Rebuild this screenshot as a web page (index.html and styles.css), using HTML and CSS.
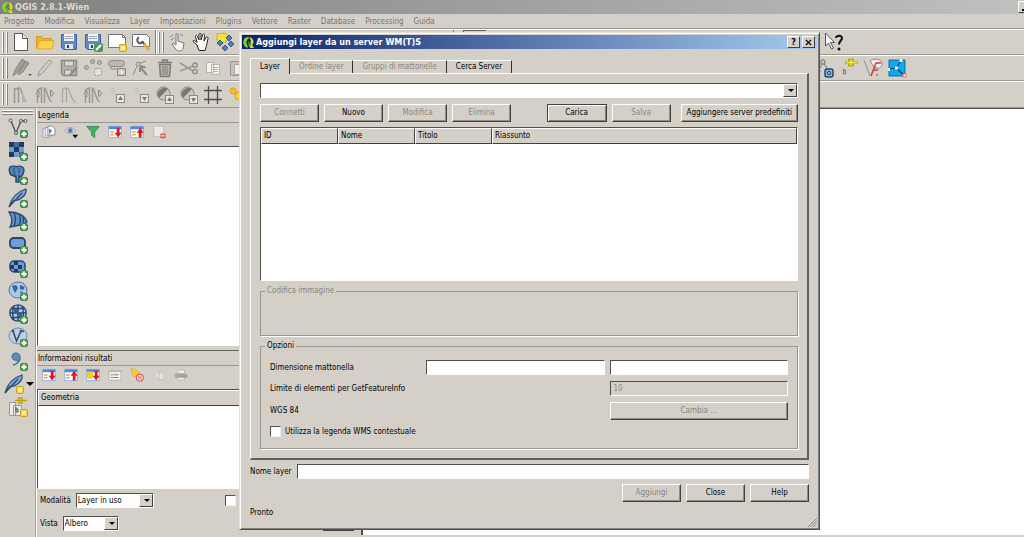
FILE: index.html
```html
<!DOCTYPE html>
<html lang="it">
<head>
<meta charset="utf-8">
<title>QGIS 2.8.1-Wien</title>
<link rel="stylesheet" href="styles.css">
</head>
<body>
<svg class="defs" width="0" height="0">
  <defs>
    <symbol id="q" viewBox="0 0 14 14"><path d="M7 1C3 1 1.500 4 1.500 7s2 5.500 5 5.500L5.500 9.500 4.500 7 5.500 4 7.500 2.500z" fill="#8ed61c"/><path d="M8 1c3 1 4.500 3 4.500 6L11 10l2 3H9L6.500 8 9 8.500 9.500 5z" fill="#d9e021"/><path d="M6.500 6l3 4" stroke="#2c8a1e" stroke-width="1.500"/></symbol>
    <symbol id="plus" viewBox="0 0 20 20"><rect x="12.500" y="12.500" width="7" height="7" rx="1.500" fill="#5aa55e" stroke="#3f8746"/><path d="M16 13.500v5M13.500 16h5" stroke="#fff" stroke-width="1.800"/></symbol>
    <symbol id="star" viewBox="0 0 20 20"><rect x="12.500" y="12.500" width="7" height="7" rx="1" fill="#f0d44a" stroke="#c2a020"/><path d="M16 13.500v5M13.500 16h5M14.300 14.300l3.400 3.400M17.700 14.300l-3.400 3.400" stroke="#fff8c8" stroke-width=".8"/></symbol>
    <symbol id="new" viewBox="0 0 20 20"><path d="M3.500 1.500h8l5 5v12h-13z" fill="#fff" stroke="#555"/><path d="M11.500 1.500v5h5" fill="#eee" stroke="#555"/></symbol>
    <symbol id="open" viewBox="0 0 20 20"><path d="M1.500 16.500V4.500h5l2 2h8v3" fill="#f0b429" stroke="#d99a1c"/><path d="M1.500 17l3-8.500h14.500l-2 8.500z" fill="#fcd34b" stroke="#dfa628"/></symbol>
    <symbol id="save" viewBox="0 0 20 20"><path d="M2.500 2.500h15v15h-13l-2-2z" fill="#5b8cc8" stroke="#3d649c"/><path d="M5 2h10v7H5z" fill="#f4f4f4"/><path d="M6 4.500h8M6 6.500h8" stroke="#9ab"/><path d="M6 12h8v5H6z" fill="#dfe6ee"/><path d="M8 13h2v3H8z" fill="#345"/></symbol>
    <symbol id="saveas" viewBox="0 0 20 20"><use href="#save"/><rect x="11" y="11" width="9" height="9" rx="2" fill="#4a9a58"/><path d="M13 18l5-5" stroke="#fff" stroke-width="2"/></symbol>
    <symbol id="comp" viewBox="0 0 20 20"><path d="M1.500 2.500h14l3 3v10h-17z" fill="#fff" stroke="#777"/><path d="M15.500 2.500v3h3" fill="none" stroke="#777"/><use href="#star"/></symbol>
    <symbol id="compm" viewBox="0 0 20 20"><path d="M1.500 2.500h14l3 3v9h-17z" fill="#fff" stroke="#777"/><path d="M8 5.500a3 3 0 1 0 4 4" fill="none" stroke="#556" stroke-width="2"/><path d="M11 9l3 4" stroke="#556" stroke-width="2"/><path d="M13 12l5 6" stroke="#d9b434" stroke-width="3"/></symbol>
    <symbol id="touch" viewBox="0 0 20 20"><path d="M9 3c0-2 2-2 2 0v6l6 2-1 6c-1 2.500-6 2.500-7 .5L5 12l1.500-1L9 13z" fill="#f4f4f4" stroke="#777"/><path d="M3 5l3-2M4 8l3-2M13 2l3 2" stroke="#888"/></symbol>
    <symbol id="hand" viewBox="0 0 20 20"><path d="M6 13L2 9.500c0-1.500 1.500-1.500 2.500-.5L6 10.500 4.500 4.500c0-1.500 1.700-1.500 2 0L8 8V2.500c0-1.500 2-1.500 2 0V8l1.500-5c.5-1.500 2-1 2 .5L13 9l2-3.500c1-1.200 2.200-.5 2 1l-1.500 7L14 18.500H8z" fill="#fff" stroke="#222"/></symbol>
    <symbol id="pansel" viewBox="0 0 20 20"><path d="M2 2l9-1 2 7-7 4-4-3z" fill="#f7e23a" stroke="#b9a10a" stroke-dasharray="2 1"/><path d="M14 3l3 3-3 3-3-3zM5 8l3 3-3 3-3-3zM16 9l3 3-3 3-3-3zM10 13l3 3-3 3-3-3z" fill="#4f7fb5" stroke="#335d8c"/></symbol>
    <symbol id="pens" viewBox="0 0 20 20"><path d="M2 18l2-6L11 1l3 2-7 11zM7 17l2-5 6-9 3 2-6 9z" fill="#a3a09b" stroke="#8a8782"/></symbol>
    <symbol id="pen" viewBox="0 0 20 20"><path d="M3 18l1.500-5L14 2l3 2L7 15.500z" fill="#cfccc6" stroke="#9a9792"/></symbol>
    <symbol id="gsave" viewBox="0 0 20 20"><path d="M2.500 2.500h15v15h-13l-2-2z" fill="#b5b2ad" stroke="#8d8a86" stroke-width="1.500"/><path d="M5.500 3h9v5h-9zM5.500 12h7v5h-7z" fill="#d9d7d2" stroke="#8d8a86"/><path d="M11 17l7-8" stroke="#8d8a86" stroke-width="2"/></symbol>
    <symbol id="nodes" viewBox="0 0 20 20"><g fill="#bbb8b3" stroke="#8d8a86"><circle cx="3.500" cy="9.500" r="2"/><circle cx="9.500" cy="3.500" r="2"/><circle cx="16.500" cy="4.500" r="2"/></g><rect x="11.500" y="10.500" width="7" height="7" rx="2" fill="#e4e2dd" stroke="#9a9792" stroke-dasharray="2 1"/></symbol>
    <symbol id="move" viewBox="0 0 20 20"><rect x="1.500" y="2.500" width="16" height="6" rx="3" fill="#bbb8b3" stroke="#8d8a86"/><path d="M4 8v3h6" fill="none" stroke="#8d8a86"/><rect x="10.500" y="10.500" width="8" height="7" fill="#c8c5c0" stroke="#8d8a86"/><path d="M12 14h4M14 12l2 2-2 2" fill="none" stroke="#fff"/></symbol>
    <symbol id="nodetool" viewBox="0 0 20 20"><path d="M2 17L7 6l8-3M7 6l8 4" fill="none" stroke="#8d8a86"/><circle cx="7" cy="6" r="2" fill="#ccc" stroke="#8d8a86"/><path d="M9 9l7 8M9 9v5M9 9h5" stroke="#8d8a86" stroke-width="2"/></symbol>
    <symbol id="trash" viewBox="0 0 20 20"><path d="M4.500 6.500h11l-1 12h-9zM3 4.500h14M7.500 4V2h5v2" fill="#bbb8b3" stroke="#7f7c77" stroke-width="1.500"/><path d="M8 8v9M10 8v9M12 8v9" stroke="#7f7c77"/></symbol>
    <symbol id="cut" viewBox="0 0 20 20"><path d="M1 5l13 8M1 13l13-5" stroke="#9a9792" stroke-width="1.500"/><g fill="none" stroke="#8d8a86" stroke-width="1.300"><circle cx="16" cy="7" r="2.200"/><circle cx="16" cy="13.500" r="2.200"/></g></symbol>
    <symbol id="copy" viewBox="0 0 20 20"><path d="M3.500 4.500h7v10h-7zM8.500 6.500h8v10h-8z" fill="#f4f3f0" stroke="#b5b2ad"/><path d="M10 9.500h5M10 11.500h5M10 13.500h5" stroke="#b5b2ad"/></symbol>
    <symbol id="paste" viewBox="0 0 20 20"><path d="M3.500 3.500h12v14h-12z" fill="#c4c1bc" stroke="#9a9792"/><path d="M7.500 6.500h9v10h-9z" fill="#f0efec" stroke="#aaa7a2"/></symbol>
    <symbol id="h1" viewBox="0 0 20 20"><path d="M3.500 18V3M3.500 4.500l4-1.500v15M8.500 3c3 1 2 10 7 14" fill="none" stroke="#9a9792" stroke-width="1.500"/><path d="M11 8v9h5z" fill="#b5b2ad"/></symbol>
    <symbol id="h2" viewBox="0 0 20 20"><path d="M2.500 18V5l4-2v15M9.500 18V3c3 1 2 10 7 14" fill="none" stroke="#9a9792" stroke-width="1.500"/><path d="M1 9l3-3v6zM19 8.500L15.500 5v7z" fill="#c9c6c0" stroke="#8d8a86"/></symbol>
    <symbol id="h3" viewBox="0 0 20 20"><path d="M3.500 18V4l4-1v14M8.500 3c3 1 2 10 8 15" fill="none" stroke="#aaa7a2" stroke-width="1.300"/></symbol>
    <symbol id="bup" viewBox="0 0 20 20"><circle cx="6" cy="6" r="3" fill="#c9c6c0"/><rect x="9.500" y="9.500" width="8" height="8" fill="#e9e7e3" stroke="#8d8a86"/><path d="M13.500 11l2.500 4h-5z" fill="#777"/></symbol>
    <symbol id="bdn" viewBox="0 0 20 20"><circle cx="6" cy="6" r="3" fill="#c9c6c0"/><rect x="9.500" y="9.500" width="8" height="8" fill="#e9e7e3" stroke="#8d8a86"/><path d="M13.500 16l2.500-4h-5z" fill="#777"/></symbol>
    <symbol id="cup" viewBox="0 0 20 20"><circle cx="8.500" cy="8.500" r="6.500" fill="#c9c6c0" stroke="#8d8a86"/><path d="M4 13A6.500 6.500 0 0 1 13 4z" fill="#7a7772"/><rect x="10.500" y="10.500" width="8" height="8" fill="#e9e7e3" stroke="#8d8a86"/><path d="M14.500 12l2.500 4h-5z" fill="#777"/></symbol>
    <symbol id="cdn" viewBox="0 0 20 20"><circle cx="8.500" cy="8.500" r="6.500" fill="#c9c6c0" stroke="#8d8a86"/><path d="M4 13A6.500 6.500 0 0 1 13 4z" fill="#7a7772"/><rect x="10.500" y="10.500" width="8" height="8" fill="#e9e7e3" stroke="#8d8a86"/><path d="M14.500 17l2.500-4h-5z" fill="#777"/></symbol>
    <symbol id="grid" viewBox="0 0 20 20"><path d="M5.500 1v18M14.500 1v18M1 5.500h18M1 14.500h18" stroke="#4c4c4c" stroke-width="1.300"/></symbol>
    <symbol id="pins" viewBox="0 0 20 20"><circle cx="6" cy="6" r="3" fill="#f6c232" stroke="#e09a20"/><circle cx="12" cy="11" r="4" fill="#fbd13c" stroke="#e09a20"/></symbol>
    <symbol id="vec" viewBox="0 0 20 20"><path d="M3 3l5 12 5-12h4" fill="none" stroke="#4a5866" stroke-width="1.400"/><g fill="#dfe8f0" stroke="#4a5866"><circle cx="2.500" cy="2.500" r="1.500"/><circle cx="8" cy="15" r="1.500"/><circle cx="13" cy="3" r="1.500"/><circle cx="17.500" cy="3" r="1.500"/></g><use href="#plus"/></symbol>
    <symbol id="ras" viewBox="0 0 20 20"><path d="M1 1h15v15H1z" fill="#6f9bd0"/><path d="M1 1h5v5H1zM11 1h5v5h-5zM6 6h5v5H6zM1 11h5v5H1z" fill="#1f3a5c"/><path d="M6 1h5v5H6zM11 11h5v5h-5z" fill="#416c9f"/><use href="#plus"/></symbol>
    <symbol id="pg" viewBox="0 0 20 20"><path d="M2 2c3-2 6 0 7-.5 3-1 7 0 7 3.500 0 3-2 6-3 7l-2-1v6H8v-5L6 11l-3-1C1 7 1 4 2 2z" fill="#5584bb" stroke="#27466b" stroke-width="1.400"/><path d="M6 3v6l2 1M11 3v5" fill="none" stroke="#27466b"/><use href="#plus"/></symbol>
    <symbol id="fea" viewBox="0 0 20 20"><path d="M1 19C3 11 8 4 18 1c1 5-4 11-13 12z" fill="#7ba6dc" stroke="#2e4c6e" stroke-width="1.200"/><path d="M1 19L14 5" stroke="#2e4c6e" stroke-width="1.200"/></symbol>
    <symbol id="spl" viewBox="0 0 20 20"><use href="#fea"/><use href="#plus"/></symbol>
    <symbol id="mss" viewBox="0 0 20 20"><path d="M1 1c8 0 16 3 18 10l-6 3-11 2c3-5 2-10-1-15z" fill="#5f90cc" stroke="#27466b" stroke-width="1.300"/><path d="M6 2c2 4 2 8 0 13M11 3c2 4 2 7 0 11M15 6c1 3 1 5-1 8" fill="none" stroke="#27466b" stroke-width="1.300"/><use href="#plus"/></symbol>
    <symbol id="ora" viewBox="0 0 20 20"><rect x="2" y="4" width="15" height="10" rx="3.500" fill="#6f9edb" stroke="#27466b" stroke-width="1.800"/><use href="#plus"/></symbol>
    <symbol id="geo" viewBox="0 0 20 20"><rect x="2" y="3" width="15" height="11" rx="4" fill="#6f9edb" stroke="#27466b" stroke-width="1.500"/><path d="M6 3h4v4H6zM2 7h4v4H2zM10 7h4v4h-4zM6 11h4v3H6z" fill="#1f3a5c"/><use href="#plus"/></symbol>
    <symbol id="wms" viewBox="0 0 20 20"><ellipse cx="10" cy="9" rx="9" ry="8" fill="#a9c8ea" stroke="#4b74a3"/><path d="M4 5l4-1 2 3-3 5-2-4zM12 4l5 2-2 3-3-1zM12 10l3 1-1 4z" fill="#3b6697"/><use href="#plus"/></symbol>
    <symbol id="wcs" viewBox="0 0 20 20"><circle cx="10" cy="9" r="8.200" fill="#a9c8ea" stroke="#27466b" stroke-width="1.300"/><path d="M2 9h16M4 4.500h12M4 13.500h12M10 1v16M6 2c-2 5-2 9 0 14M14 2c2 5 2 9 0 14" fill="none" stroke="#27466b" stroke-width="1.400"/><path d="M6 5h4v4H6zM10 9h4v4h-4z" fill="#35608f"/><use href="#plus"/></symbol>
    <symbol id="wfs" viewBox="0 0 20 20"><ellipse cx="10" cy="9" rx="9" ry="8" fill="#b9cfe6" stroke="#6c8cb0"/><path d="M5 4l3.500 10L13 4l3 .5" fill="none" stroke="#37495c" stroke-width="1.500"/><circle cx="5" cy="4" r="1.300" fill="#37495c"/><circle cx="13" cy="4" r="1.300" fill="#37495c"/><use href="#plus"/></symbol>
    <symbol id="csv" viewBox="0 0 20 20"><path d="M5 14c4-1 5-3 4.500-5C7 10 4 8.500 4 5.500 4 3 6 2 8 2c6 0 6 11-3 12z" fill="#5b8cc4" stroke="#3a618e"/><use href="#plus"/></symbol>
    <symbol id="nfe" viewBox="0 0 20 20"><use href="#fea"/><use href="#star"/></symbol>
    <symbol id="rec" viewBox="0 0 20 20"><path d="M1.500 5.500h6v13h-6zM5.500 8.500h8v10h-8z" fill="#eceae6" stroke="#999"/><path d="M7 3.500h12M11 1v5h3V1z" fill="#f4e04a" stroke="#b9a10a" stroke-width="1.500"/><path d="M8 10v5h2v-3H8" fill="none" stroke="#456"/><use href="#star"/></symbol>
    <symbol id="grp" viewBox="0 0 20 20"><path d="M1.500 5.500h9v12h-9z" fill="#fff" stroke="#889"/><path d="M4.500 3.500h9v12h-9z" fill="#eef" stroke="#889"/><path d="M8.500 1.500h6l4 4v9h-10z" fill="#fff" stroke="#667"/><path d="M11 12V7l3 2" fill="none" stroke="#57a" stroke-width="2"/></symbol>
    <symbol id="eye" viewBox="0 0 20 20"><path d="M1 8c5-6 11-6 16 0-5 5-11 5-16 0z" fill="#d5dce6" stroke="#8795a8"/><circle cx="9" cy="8" r="3.500" fill="#5f7fa8"/><path d="M12 14h8l-4 5z" fill="#000"/></symbol>
    <symbol id="fil" viewBox="0 0 20 20"><path d="M1 2h18l-6.500 8v8L8 15v-5z" fill="#45b05f" stroke="#2a7f42"/></symbol>
    <symbol id="tr" viewBox="0 0 20 20"><path d="M1 2h18v16H1z" fill="#fff" stroke="#6a9bea"/><path d="M1 2h18v4H1z" fill="#4f86e0"/><path d="M3 9h5v2H3zM3 13h5v2H3z" fill="#f09a4a"/></symbol>
    <symbol id="trd" viewBox="0 0 20 20"><use href="#tr"/><path d="M12.500 4h4v7h3L14.500 18 9.500 11h3z" fill="#e01818"/></symbol>
    <symbol id="tru" viewBox="0 0 20 20"><use href="#tr"/><path d="M12.500 18h4v-7h3L14.500 4 9.500 11h3z" fill="#e01818"/></symbol>
    <symbol id="try" viewBox="0 0 20 20"><use href="#trd"/><path d="M1 5h9v9H1z" fill="#f2cf1d"/></symbol>
    <symbol id="rem" viewBox="0 0 20 20"><path d="M2.500 1.500h14v15h-14z" fill="#e9e9e9" stroke="#b5b5b5"/><rect x="12" y="12" width="7.500" height="7" rx="1" fill="#e8505a"/><path d="M13.500 15.500h4.500" stroke="#fff" stroke-width="1.600"/></symbol>
    <symbol id="lst" viewBox="0 0 20 20"><path d="M1.500 3.500h17v14h-17z" fill="#f3f3f0" stroke="#a5a5a0"/><path d="M1 3h18v3H1z" fill="#b9b9b4"/><path d="M4 9.500h3M8 9.500h7M4 13.500h3M8 13.500h7" stroke="#777" stroke-width="1.500"/></symbol>
    <symbol id="clr" viewBox="0 0 20 20"><path d="M1 1l6 1 7 5-2 5H5z" fill="#f7d02d" stroke="#d8a520"/><circle cx="14" cy="14" r="5" fill="#fbdada" stroke="#dd5a5a" stroke-width="1.500"/><path d="M11 11l6 6M17 11l-6 6" stroke="#dd5a5a" stroke-width="1.300"/></symbol>
    <symbol id="gcp" viewBox="0 0 20 20"><path d="M4.500 4.500h6v11h-6zM8.500 6.500h8v10h-8z" fill="#e6e3dd" stroke="#c2bfb9"/></symbol>
    <symbol id="prn" viewBox="0 0 20 20"><path d="M5 3h10v5H5zM5 13h10v4H5z" fill="#eee" stroke="#aaa"/><path d="M1 8h18v6H1z" fill="#a9a6a1"/></symbol>
    <symbol id="what" viewBox="0 0 20 20"><path d="M1.500 1v13l3-3 3 6 2-1-3-5.500h4z" fill="#fff" stroke="#555"/><path d="M12 6c0-3 6.500-3 6 .5-.300 2-3 2.500-3 6" fill="none" stroke="#111" stroke-width="2"/><circle cx="15" cy="17" r="1.500" fill="#111"/></symbol>
    <symbol id="tree" viewBox="0 0 20 20"><path d="M8 4L4 12M8 4l5 8" stroke="#777"/><circle cx="8" cy="4" r="2.200" fill="#ccc" stroke="#666"/><circle cx="4" cy="13" r="1.500" fill="#777"/><rect x="10" y="11" width="8" height="8" rx="2" fill="#8fb6d8" stroke="#234a6b" stroke-width="1.500"/><circle cx="14" cy="15" r="1.700" fill="none" stroke="#234a6b"/></symbol>
    <symbol id="lab" viewBox="0 0 20 20"><path d="M6 4.500h13M10.500 2v5h3V2z" fill="#f4ee4a" stroke="#b9ad1a" stroke-width="3"/><path d="M7 4.500h11M12 2v5" stroke="#f4ee4a" stroke-width="1.500"/><path d="M4.500 11v5h2v-4h-2" fill="none" stroke="#678"/></symbol>
    <symbol id="top" viewBox="0 0 20 20"><path d="M1 2l6 16" stroke="#8aa" stroke-width="1.300"/><path d="M7 3c4-3 10-2 12 1 1 4-2 7-5 6l-3-1z" fill="#eee" stroke="#888"/><path d="M8 18l5-13h5M10 12h5" fill="none" stroke="#d93434" stroke-width="1.500"/><path d="M13 17h2" stroke="#6a9" stroke-width="2"/></symbol>
    <symbol id="vor" viewBox="0 0 20 20"><path d="M2 2h16v16H2z" fill="#12a8ee" stroke="#0d6ea6"/><path d="M2 11l7-1 5-7M9 10l8 7" fill="none" stroke="#083a5c" stroke-width="1.200"/><path d="M8 8.500h3v3H8zM12.500 1h3v3h-3zM1 10h2v3H1z" fill="#e8f6ff"/><path d="M16 16h3v3h-3z" fill="#fff" stroke="#e66"/></symbol>
  </defs>
</svg>

<header class="titlebar">
  <svg class="logo"><use href="#q"/></svg>
  <h1>QGIS 2.8.1-Wien</h1>
  <button class="cap min" aria-label="Minimize"><span></span></button>
</header>
<nav class="menu">
  <button>Progetto</button><button>Modifica</button><button>Visualizza</button><button>Layer</button><button>Impostazioni</button><button>Plugins</button><button>Vettore</button><button>Raster</button><button>Database</button><button>Processing</button><button>Guida</button>
</nav>

<div class="toolbar">
  <div class="group file"><i class="grip"></i>
    <button><svg><use href="#new"/></svg></button><button><svg><use href="#open"/></svg></button><button><svg><use href="#save"/></svg></button><button><svg><use href="#saveas"/></svg></button><button><svg><use href="#comp"/></svg></button><button><svg><use href="#compm"/></svg></button>
  </div>
  <div class="group nav"><i class="grip"></i>
    <button><svg><use href="#touch"/></svg></button><button><svg><use href="#hand"/></svg></button><button><svg><use href="#pansel"/></svg></button>
  </div>
  <div class="group attr"><i class="pressed"></i></div>
  <div class="group help"><button><svg><use href="#what"/></svg></button></div>
</div>
<div class="toolbar">
  <div class="group edit"><i class="grip"></i>
    <button><svg><use href="#pens"/></svg><b class="drop small"></b></button><button><svg><use href="#pen"/></svg></button><button><svg><use href="#gsave"/></svg></button><button><svg><use href="#nodes"/></svg></button><button><svg><use href="#move"/></svg></button><button><svg><use href="#nodetool"/></svg></button><button><svg><use href="#trash"/></svg></button><button><svg><use href="#cut"/></svg></button><button><svg><use href="#copy"/></svg></button><button><svg><use href="#paste"/></svg></button>
  </div>
  <div class="group plug"><button><svg><use href="#tree"/></svg></button><button><svg><use href="#lab"/></svg></button><button><svg><use href="#top"/></svg></button><button><svg><use href="#vor"/></svg></button></div>
</div>
<div class="toolbar">
  <div class="group"><i class="grip"></i>
    <button><svg><use href="#h1"/></svg></button><button><svg><use href="#h2"/></svg></button><button><svg><use href="#h3"/></svg></button><button><svg><use href="#h2"/></svg></button><button><svg><use href="#bup"/></svg></button><button><svg><use href="#bdn"/></svg></button><button><svg><use href="#cup"/></svg></button><button><svg><use href="#cdn"/></svg></button><button><svg><use href="#grid"/></svg></button><button><svg><use href="#pins"/></svg></button>
  </div>
</div>

<main class="work">
  <aside class="side">
    <i class="grip flat"></i>
    <div class="layers">
      <button><svg><use href="#vec"/></svg></button><button><svg><use href="#ras"/></svg></button><button><svg><use href="#pg"/></svg></button><button><svg><use href="#spl"/></svg></button><button><svg><use href="#mss"/></svg></button><button><svg><use href="#ora"/></svg></button><button><svg><use href="#geo"/></svg></button><button><svg><use href="#wms"/></svg></button><button><svg><use href="#wcs"/></svg></button><button><svg><use href="#wfs"/></svg></button><button><svg><use href="#csv"/></svg></button><button class="wide"><svg><use href="#nfe"/></svg><b class="drop"></b></button><button><svg><use href="#rec"/></svg></button>
    </div>
  </aside>
  <section class="docks">
    <section class="dock">
      <h2>Legenda</h2>
      <div class="tools"><button><svg><use href="#grp"/></svg></button><button><svg><use href="#eye"/></svg></button><button><svg><use href="#fil"/></svg></button><button><svg><use href="#trd"/></svg></button><button><svg><use href="#tru"/></svg></button><button><svg><use href="#rem"/></svg></button></div>
      <div class="list tall"></div>
    </section>
    <section class="dock info">
      <h2>Informazioni risultati</h2>
      <div class="tools"><button><svg><use href="#trd"/></svg></button><button><svg><use href="#tru"/></svg></button><button><svg><use href="#try"/></svg></button><button><svg><use href="#lst"/></svg></button><button><svg><use href="#clr"/></svg></button><button><svg><use href="#gcp"/></svg></button><button><svg><use href="#prn"/></svg></button></div>
      <div class="list"><table><thead><tr><th>Geometria</th></tr></thead></table></div>
      <div class="line"><label for="mode">Modalità</label><span class="pick mode"><select id="mode"><option>Layer in uso</option></select></span><input type="checkbox" class="auto" aria-label="Apri modulo"></div>
      <div class="line"><label for="view">Vista</label><span class="pick view"><select id="view"><option>Albero</option></select></span><span class="foot"></span></div>
    </section>
  </section>
  <section class="canvas"></section>
</main>

<section class="dialog" role="dialog" aria-labelledby="dt">
  <header class="caption">
    <svg class="logo"><use href="#q"/></svg>
    <h2 id="dt">Aggiungi layer da un server WM(T)S</h2>
    <button class="cap">?</button>
    <button class="cap" aria-label="Close window"><svg viewBox="0 0 8 8"><path d="M1 1l6 6M7 1L1 7" stroke="#000" stroke-width="1.500"/></svg></button>
  </header>
  <div class="body">
    <div class="tabs" role="tablist">
      <button role="tab" class="tab on" aria-selected="true">Layer</button><button role="tab" class="tab" disabled>Ordine layer</button><button role="tab" class="tab" disabled>Gruppi di mattonelle</button><button role="tab" class="tab">Cerca Server</button>
    </div>
    <div class="pane">
      <span class="pick server"><select aria-label="Server"></select></span>
      <div class="actions">
        <button class="btn" disabled>Connetti</button><button class="btn">Nuovo</button><button class="btn" disabled>Modifica</button><button class="btn" disabled>Elimina</button>
        <button class="btn default">Carica</button><button class="btn" disabled>Salva</button><button class="btn add">Aggiungere server predefiniti</button>
      </div>
      <div class="list results"><table><thead><tr><th class="c">ID</th><th class="c">Nome</th><th class="c">Titolo</th><th>Riassunto</th></tr></thead></table></div>
      <fieldset class="code" disabled><legend>Codifica immagine</legend></fieldset>
      <fieldset class="opts"><legend>Opzioni</legend>
        <div class="form">
          <label for="tw">Dimensione mattonella</label><input type="text" id="tw"><input type="text" aria-label="Altezza">
          <label for="lim" class="two">Limite di elementi per GetFeatureInfo</label><input type="text" id="lim" value="10" disabled>
          <span class="two">WGS 84</span><button class="btn" disabled>Cambia ...</button>
          <label class="check"><input type="checkbox">Utilizza la legenda WMS contestuale</label>
        </div>
      </fieldset>
    </div>
    <div class="name"><label for="nm">Nome layer</label><input type="text" id="nm"></div>
    <div class="actions end"><button class="btn" disabled>Aggiungi</button><button class="btn">Close</button><button class="btn">Help</button></div>
    <p class="status">Pronto</p>
  </div>
  <svg class="resize" viewBox="0 0 10 10"><path d="M0 10L10 0M3 10l7-7M6 10l4-4" stroke="#808080"/></svg>
</section>
</body>
</html>
```
FILE: styles.css
```css
* { box-sizing: border-box; margin: 0; padding: 0; }
body {
  display: flex; flex-direction: column; min-height: 100vh; position: relative;
  background: #d4d0c8; color: #000;
  font: 8px/12px "DejaVu Sans Condensed", "DejaVu Sans", sans-serif;
}
button, input, select { font: inherit; color: inherit; border: 0; background: none; border-radius: 0; }
h1, h2 { font-size: 8px; font-weight: normal; line-height: 12px; }
.defs { position: absolute; }

.titlebar { display: flex; align-items: center; height: 14px; padding-left: 1px; background: linear-gradient(90deg, #808080, #c0c0c0); overflow: hidden; }
.titlebar h1 { flex: 1; color: #dedbd4; font-size: 9px; font-weight: bold; }
.logo { width: 13px; height: 13px; margin-right: 1px; flex: none; }
.cap {
  display: flex; align-items: center; justify-content: center; width: 13px; height: 12px; flex: none;
  background: #d4d0c8; border: 1px solid; border-color: #fff #404040 #404040 #fff; font-size: 9px; font-weight: bold;
}
.cap svg { width: 7px; height: 7px; }
.min { margin-right: -7px; }
.min span { width: 6px; height: 2px; margin-top: 5px; background: #000; }

.menu { display: flex; gap: 10px; height: 15px; padding-left: 4px; border-bottom: 1px solid #9a9791; color: #77746e; }
.menu button { line-height: 16px; }

.toolbar { display: flex; height: 26px; border-top: 1px solid #fff; border-bottom: 1px solid #9a9791; }
.toolbar + .toolbar + .toolbar { height: 27px; }
.group { display: flex; align-items: center; }
.group button, .tools button { position: relative; display: flex; align-items: center; justify-content: center; width: 24px; height: 23px; }
.group svg { width: 20px; height: 20px; }
.grip { width: 5px; height: 21px; margin: 0 2px 0 2px; border: solid #fff; border-width: 0 1px; box-shadow: 1px 0 #808080, inset -1px 0 #d4d0c8, inset 1px 0 #808080; }
.file { width: 156px; border-right: 1px solid #808080; box-shadow: 1px 0 #fff; }
.nav { width: 298px; border-right: 1px solid #808080; }
.attr { flex: 1; align-items: flex-start; padding-left: 9px; }
.pressed { width: 24px; height: 22px; border: 1px solid; border-color: #606060 #fff #fff #606060; }
.help { width: 202px; }
.edit { flex: 1; }
.plug { width: 211px; }
.drop { position: absolute; right: -8px; top: 8px; border: 4px solid transparent; border-top-color: #000; border-bottom: 0; }
.small { right: 1px; top: 17px; border-width: 2px; border-top-color: #555; }

.work { display: flex; flex: 1; }
.side { width: 36px; border-right: 1px solid #a5a29c; }
.flat { display: block; width: 31px; height: 4px; margin: 2px 0 0 2px; border-width: 1px 0; box-shadow: 0 1px #808080, inset 0 1px #808080; }
.layers { display: flex; flex-direction: column; justify-content: space-between; height: 299px; margin-top: 4px; padding-left: 8px; }
.layers button { position: relative; width: 20px; height: 20px; }
.layers svg { display: block; width: 20px; height: 20px; }
.layers .wide { margin-left: -4px; width: 22px; }

.docks { display: flex; flex-direction: column; width: 325px; border-left: 1px solid #fff; }
.dock h2 { height: 15px; line-height: 15px; padding-left: 1px; border-bottom: 1px solid #9a9791; }
.info { margin-top: 4px; border-top: 1px solid #606060; }
.tools { display: flex; height: 23px; align-items: flex-start; padding-left: 1px; }
.tools button { width: 22px; height: 18px; }
.tools svg { width: 14px; height: 14px; }
.tall { height: 200px; }
.list { background: #fff; border: 1px solid; border-color: #505050 #fff #fff #505050; }
.info .list { height: 100px; }
.list table { width: 100%; border-collapse: separate; border-spacing: 0; table-layout: fixed; }
.list th { height: 16px; padding-left: 2px; background: #d4d0c8; border: 1px solid; border-color: #fff #404040 #404040 #fff; font-weight: normal; text-align: left; }
.list .c { width: 77px; }
.line { display: flex; align-items: center; height: 15px; margin: 4px 0 0 3px; }
.line + .line { margin-top: 8px; }
.line label { margin-right: 5px; }
.pick { position: relative; display: flex; height: 15px; background: #fff; border: 1px solid; border-color: #505050 #fff #fff #505050; }
.pick select { flex: 1; width: 100%; padding-left: 1px; appearance: none; outline: 0; }
.pick::after { content: ""; position: absolute; right: 0; top: 0; bottom: 0; width: 12px; background: #d4d0c8; border: 1px solid; border-color: #fff #404040 #404040 #fff; pointer-events: none; }
.pick::before { content: ""; position: absolute; z-index: 1; right: 3px; top: 5px; border: 3px solid transparent; border-top-color: #000; border-bottom: 0; pointer-events: none; }
.mode { width: 78px; }
.view { width: 56px; }
.auto { margin-left: 71px; }
.foot { align-self: flex-end; width: 31px; height: 15px; margin-left: auto; margin-right: 7px; border-bottom: 1px solid #404040; }
input[type="checkbox"] { appearance: none; width: 11px; height: 11px; background: #fff; border: 1px solid; border-color: #505050 #eee #eee #505050; flex: none; }
.canvas { flex: 1; margin-bottom: 2px; background: #fff; border: solid #505050; border-width: 1px 0 0 2px; }

.dialog { position: absolute; left: 239px; right: 204px; top: 32px; background: #d4d0c8; border: 1px solid; border-color: #e4e1da #505050 #505050 #e4e1da; box-shadow: inset 1px 1px #fff, inset -1px -1px #808080; padding: 2px; }
.caption { display: flex; align-items: center; height: 14px; padding-right: 2px; background: linear-gradient(90deg, #0a246a, #a6caf0); }
.caption h2 { flex: 1; color: #fff; font-size: 9px; font-weight: bold; }
.caption .cap + .cap { margin-left: 2px; }
.body { padding: 9px 8px 7px; }
.tabs { display: flex; align-items: flex-end; height: 15px; }
.tab { height: 13px; padding: 0 9px; border-top: 1px solid #fff; border-right: 1px solid #333; }
.tab.on { position: relative; height: 16px; margin-bottom: -1px; border-left: 1px solid #fff; background: #d4d0c8; }
.tab:disabled, .btn:disabled, input:disabled, .code { color: #8a8780; }
.pane { padding: 9px 9px 9px 9px; border: solid; border-width: 1px 2px 2px 1px; border-color: #fff #606060 #606060 #fff; }
.actions { display: flex; gap: 5px; margin: 6px 0 5px; }
.btn { width: 59px; height: 18px; border: 1px solid; border-color: #fff #404040 #404040 #fff; box-shadow: inset -1px -1px #908d87; }
.default { width: 60px; margin-left: auto; border: 1px solid #404040; box-shadow: inset 1px 1px #fff, inset -1px -1px #808080; }
.add { width: auto; padding: 0 5px; margin-left: 5px; }
.results { height: 154px; }
fieldset { min-width: 0; border: 1px solid #9a9791; box-shadow: 1px 1px #fff; }
legend { height: 10px; line-height: 10px; margin-left: 4px; padding: 0 2px; }
.code { height: 50px; margin-top: 5px; }
.opts { height: 108px; margin-top: 5px; padding: 9px; }
.opts legend { margin-left: -5px; }
.form { display: grid; grid-template-columns: 151px 1fr 1fr; gap: 6px 5px; align-items: center; }
.two { grid-column: span 2; }
.form .btn { width: 100%; }
.check { grid-column: span 3; display: flex; gap: 4px; }
input[type="text"] { min-width: 0; width: 100%; height: 15px; padding: 0 3px; background: #fff; border: 1px solid; border-color: #505050 #fff #fff #505050; }
input[type="text"]:disabled { background: #d4d0c8; }
.name { display: flex; align-items: center; gap: 5px; margin-top: 4px; white-space: nowrap; }
.end { justify-content: flex-end; margin: 5px 0; }
.status { height: 13px; }
.resize { position: absolute; right: 2px; bottom: 2px; width: 9px; height: 9px; }
```
